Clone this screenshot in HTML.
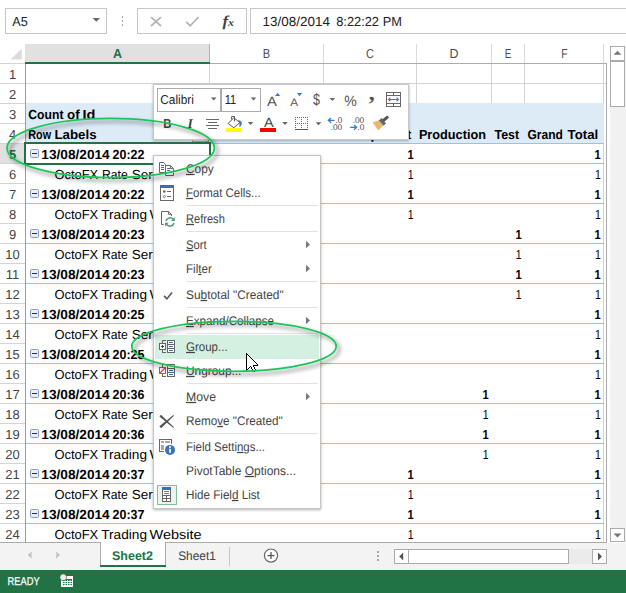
<!DOCTYPE html>
<html lang="en"><head><meta charset="utf-8"><title>Excel PivotTable - Group</title>
<style>html,body{margin:0;padding:0;background:#fff;overflow:hidden}svg{display:block}text{white-space:pre}</style></head><body>
<svg width="626" height="593" viewBox="0 0 626 593" font-family="'Liberation Sans', sans-serif" shape-rendering="crispEdges" text-rendering="geometricPrecision">
<defs>
<filter id="sh" x="-10%" y="-10%" width="120%" height="120%"><feGaussianBlur in="SourceAlpha" stdDeviation="1.8"/><feOffset dx="0.3" dy="1" result="b"/><feComponentTransfer><feFuncA type="linear" slope="0.3"/></feComponentTransfer><feMerge><feMergeNode/><feMergeNode in="SourceGraphic"/></feMerge></filter>
<filter id="esh" x="-5%" y="-10%" width="110%" height="125%"><feGaussianBlur in="SourceAlpha" stdDeviation="1.9"/><feOffset dx="3" dy="3"/><feComponentTransfer><feFuncA type="linear" slope="0.55"/></feComponentTransfer><feMerge><feMergeNode/><feMergeNode in="SourceGraphic"/></feMerge></filter>
</defs>
<rect x="0" y="0" width="626" height="593" fill="#fff" />
<rect x="5.5" y="8.5" width="101" height="25" fill="#fff" stroke="#c6c6c6"/>
<text x="12.2" y="26" font-size="13.1" fill="#222" textLength="15.5" lengthAdjust="spacingAndGlyphs" >A5</text>
<path d="M92.6 18 L100 18 L96.3 21.8 Z" fill="#666" shape-rendering="geometricPrecision"/>
<rect x="121.5" y="16.0" width="1.6" height="1.6" fill="#a6a6a6" />
<rect x="121.5" y="20.0" width="1.6" height="1.6" fill="#a6a6a6" />
<rect x="121.5" y="24.0" width="1.6" height="1.6" fill="#a6a6a6" />
<rect x="137.5" y="8.5" width="109" height="25" fill="#fff" stroke="#c6c6c6"/>
<path d="M151 17.2 L161 26 M161 17.2 L151 26" stroke="#b4b4b4" stroke-width="1.7" fill="none" shape-rendering="geometricPrecision"/>
<path d="M186.2 21.8 L190.2 25.8 L198.6 17" stroke="#b4b4b4" stroke-width="1.8" fill="none" shape-rendering="geometricPrecision"/>
<text x="222.5" y="25.5" font-family="'Liberation Serif', serif" font-style="italic" font-weight="bold" font-size="15" fill="#444" textLength="11.5" lengthAdjust="spacingAndGlyphs"><tspan font-size="15">f</tspan><tspan font-size="10.5" dy="0.3">x</tspan></text>
<path d="M626 8.5 H250.5 V33.5 H626" fill="none" stroke="#c6c6c6"/>
<text x="262.6" y="26.4" font-size="13.1" fill="#222" ><tspan x="262.6" textLength="67.4" lengthAdjust="spacingAndGlyphs">13/08/2014</tspan>  <tspan x="336.2" textLength="42.8" lengthAdjust="spacingAndGlyphs">8:22:22</tspan> <tspan x="382.8" textLength="19.2" lengthAdjust="spacingAndGlyphs">PM</tspan></text>
<path d="M21.8 48.6 L21.8 59.6 L10.6 59.6 Z" fill="#dcdcdc" shape-rendering="geometricPrecision"/>
<rect x="25" y="44" width="184" height="18" fill="#e1e1e1" />
<rect x="209" y="44" width="1" height="18" fill="#b4b4b4" />
<rect x="25" y="62" width="185" height="2" fill="#217346" />
<text x="113.0" y="58" font-size="13" fill="#217346" font-weight="bold" textLength="9" lengthAdjust="spacingAndGlyphs" >A</text>
<text x="262.8" y="58" font-size="13" fill="#505050" textLength="7.4" lengthAdjust="spacingAndGlyphs" >B</text>
<text x="366.0" y="58" font-size="13" fill="#505050" textLength="8" lengthAdjust="spacingAndGlyphs" >C</text>
<text x="449.5" y="58" font-size="13" fill="#505050" textLength="9" lengthAdjust="spacingAndGlyphs" >D</text>
<text x="504.7" y="58" font-size="13" fill="#505050" textLength="6.6" lengthAdjust="spacingAndGlyphs" >E</text>
<text x="561.35" y="58" font-size="13" fill="#505050" textLength="6.3" lengthAdjust="spacingAndGlyphs" >F</text>
<rect x="323" y="44" width="1" height="19" fill="#dadada" />
<rect x="416" y="44" width="1" height="19" fill="#dadada" />
<rect x="491" y="44" width="1" height="19" fill="#dadada" />
<rect x="524" y="44" width="1" height="19" fill="#dadada" />
<rect x="603" y="44" width="1" height="19" fill="#dadada" />
<rect x="210" y="63" width="397" height="1" fill="#ababab" />
<rect x="0" y="63" width="25" height="1" fill="#d4d4d4" />
<rect x="26" y="103" width="578" height="40" fill="#ddebf7" />
<rect x="26" y="83" width="580" height="1" fill="#d4d4d4" />
<rect x="26" y="103" width="578" height="1" fill="#ddebf7" />
<rect x="209" y="64" width="1" height="39" fill="#d4d4d4" />
<rect x="323" y="64" width="1" height="39" fill="#d4d4d4" />
<rect x="416" y="64" width="1" height="39" fill="#d4d4d4" />
<rect x="491" y="64" width="1" height="39" fill="#d4d4d4" />
<rect x="524" y="64" width="1" height="39" fill="#d4d4d4" />
<rect x="603" y="64" width="1" height="39" fill="#d4d4d4" />
<rect x="603" y="144" width="1" height="398" fill="#d4d4d4" />
<text x="12.5" y="79" font-size="13" fill="#444" text-anchor="middle" >1</text>
<rect x="0" y="83" width="25" height="1" fill="#d4d4d4" />
<text x="12.5" y="99" font-size="13" fill="#444" text-anchor="middle" >2</text>
<rect x="0" y="103" width="25" height="1" fill="#d4d4d4" />
<text x="12.5" y="119" font-size="13" fill="#444" text-anchor="middle" >3</text>
<rect x="0" y="123" width="25" height="1" fill="#d4d4d4" />
<text x="12.5" y="139" font-size="13" fill="#444" text-anchor="middle" >4</text>
<rect x="0" y="143" width="25" height="1" fill="#d4d4d4" />
<rect x="0" y="144" width="25" height="19" fill="#e1e1e1" />
<text x="12.5" y="159" font-size="13" fill="#217346" font-weight="bold" text-anchor="middle" >5</text>
<rect x="0" y="163" width="25" height="1" fill="#d4d4d4" />
<text x="12.5" y="179" font-size="13" fill="#444" text-anchor="middle" >6</text>
<rect x="0" y="183" width="25" height="1" fill="#d4d4d4" />
<text x="12.5" y="199" font-size="13" fill="#444" text-anchor="middle" >7</text>
<rect x="0" y="203" width="25" height="1" fill="#d4d4d4" />
<text x="12.5" y="219" font-size="13" fill="#444" text-anchor="middle" >8</text>
<rect x="0" y="223" width="25" height="1" fill="#d4d4d4" />
<text x="12.5" y="239" font-size="13" fill="#444" text-anchor="middle" >9</text>
<rect x="0" y="243" width="25" height="1" fill="#d4d4d4" />
<text x="12.5" y="259" font-size="13" fill="#444" text-anchor="middle" >10</text>
<rect x="0" y="263" width="25" height="1" fill="#d4d4d4" />
<text x="12.5" y="279" font-size="13" fill="#444" text-anchor="middle" >11</text>
<rect x="0" y="283" width="25" height="1" fill="#d4d4d4" />
<text x="12.5" y="299" font-size="13" fill="#444" text-anchor="middle" >12</text>
<rect x="0" y="303" width="25" height="1" fill="#d4d4d4" />
<text x="12.5" y="319" font-size="13" fill="#444" text-anchor="middle" >13</text>
<rect x="0" y="323" width="25" height="1" fill="#d4d4d4" />
<text x="12.5" y="339" font-size="13" fill="#444" text-anchor="middle" >14</text>
<rect x="0" y="343" width="25" height="1" fill="#d4d4d4" />
<text x="12.5" y="359" font-size="13" fill="#444" text-anchor="middle" >15</text>
<rect x="0" y="363" width="25" height="1" fill="#d4d4d4" />
<text x="12.5" y="379" font-size="13" fill="#444" text-anchor="middle" >16</text>
<rect x="0" y="383" width="25" height="1" fill="#d4d4d4" />
<text x="12.5" y="399" font-size="13" fill="#444" text-anchor="middle" >17</text>
<rect x="0" y="403" width="25" height="1" fill="#d4d4d4" />
<text x="12.5" y="419" font-size="13" fill="#444" text-anchor="middle" >18</text>
<rect x="0" y="423" width="25" height="1" fill="#d4d4d4" />
<text x="12.5" y="439" font-size="13" fill="#444" text-anchor="middle" >19</text>
<rect x="0" y="443" width="25" height="1" fill="#d4d4d4" />
<text x="12.5" y="459" font-size="13" fill="#444" text-anchor="middle" >20</text>
<rect x="0" y="463" width="25" height="1" fill="#d4d4d4" />
<text x="12.5" y="479" font-size="13" fill="#444" text-anchor="middle" >21</text>
<rect x="0" y="483" width="25" height="1" fill="#d4d4d4" />
<text x="12.5" y="499" font-size="13" fill="#444" text-anchor="middle" >22</text>
<rect x="0" y="503" width="25" height="1" fill="#d4d4d4" />
<text x="12.5" y="519" font-size="13" fill="#444" text-anchor="middle" >23</text>
<rect x="0" y="523" width="25" height="1" fill="#d4d4d4" />
<text x="12.5" y="539" font-size="13" fill="#444" text-anchor="middle" >24</text>
<rect x="0" y="543" width="25" height="1" fill="#d4d4d4" />
<rect x="25" y="64" width="1" height="478" fill="#9b9b9b" />
<rect x="606" y="63" width="1" height="480" fill="#ababab" />
<rect x="0" y="542" width="607" height="1" fill="#ababab" />
<rect x="26" y="143" width="578" height="1" fill="#9bc2e6" />
<rect x="26" y="163" width="578" height="1" fill="#9bc2e6" />
<rect x="26" y="203" width="578" height="1" fill="#9bc2e6" />
<rect x="26" y="243" width="578" height="1" fill="#9bc2e6" />
<rect x="26" y="283" width="578" height="1" fill="#9bc2e6" />
<rect x="26" y="323" width="578" height="1" fill="#9bc2e6" />
<rect x="26" y="363" width="578" height="1" fill="#9bc2e6" />
<rect x="26" y="403" width="578" height="1" fill="#9bc2e6" />
<rect x="26" y="443" width="578" height="1" fill="#9bc2e6" />
<rect x="26" y="483" width="578" height="1" fill="#9bc2e6" />
<rect x="26" y="523" width="578" height="1" fill="#9bc2e6" />
<text x="28.3" y="119.2" font-size="13.1" fill="#000" font-weight="bold" ><tspan x="28.3" textLength="35.2" lengthAdjust="spacingAndGlyphs">Count</tspan> <tspan x="67" textLength="12.6" lengthAdjust="spacingAndGlyphs">of</tspan> <tspan x="82.6" textLength="12.9" lengthAdjust="spacingAndGlyphs">Id</tspan></text>
<text x="28.3" y="139.2" font-size="13.1" fill="#000" font-weight="bold" ><tspan x="28.3" textLength="22.8" lengthAdjust="spacingAndGlyphs">Row</tspan> <tspan x="54.4" textLength="42.2" lengthAdjust="spacingAndGlyphs">Labels</tspan></text>
<text x="411.4" y="139.2" font-size="13.1" fill="#000" font-weight="bold" text-anchor="end" textLength="85.5" lengthAdjust="spacingAndGlyphs" >Development</text>
<text x="418.9" y="139.2" font-size="13.1" fill="#000" font-weight="bold" textLength="67.1" lengthAdjust="spacingAndGlyphs" >Production</text>
<text x="494.5" y="139.2" font-size="13.1" fill="#000" font-weight="bold" textLength="24.5" lengthAdjust="spacingAndGlyphs" >Test</text>
<text x="527.6" y="139.2" font-size="13.1" fill="#000" font-weight="bold" ><tspan x="527.5" textLength="35.4" lengthAdjust="spacingAndGlyphs">Grand</tspan> <tspan x="567.6" textLength="30.6" lengthAdjust="spacingAndGlyphs">Total</tspan></text>
<rect x="30.5" y="149.5" width="8" height="8" rx="1.2" fill="#eceef5" stroke="#8e9bb5" shape-rendering="geometricPrecision"/>
<rect x="32" y="153" width="5" height="1" fill="#1f2f6f" />
<text x="41.4" y="159.2" font-size="13.1" fill="#000" font-weight="bold" ><tspan x="41.3" textLength="68.4" lengthAdjust="spacingAndGlyphs">13/08/2014</tspan> <tspan x="112.6" textLength="31.8" lengthAdjust="spacingAndGlyphs">20:22</tspan></text>
<text x="54.6" y="179.2" font-size="13.1" fill="#000" ><tspan x="54.4" textLength="43.8" lengthAdjust="spacingAndGlyphs">OctoFX</tspan> <tspan x="101.9" textLength="25.8" lengthAdjust="spacingAndGlyphs">Rate</tspan> <tspan x="131.7" textLength="45.2" lengthAdjust="spacingAndGlyphs">Service</tspan></text>
<text x="413.6" y="159.2" font-size="13.1" fill="#000" font-weight="bold" text-anchor="end" textLength="6.2" lengthAdjust="spacingAndGlyphs" >1</text>
<text x="600.8000000000001" y="159.2" font-size="13.1" fill="#000" font-weight="bold" text-anchor="end" textLength="6.2" lengthAdjust="spacingAndGlyphs" >1</text>
<text x="413.6" y="179.2" font-size="13.1" fill="#000" text-anchor="end" textLength="5.8" lengthAdjust="spacingAndGlyphs" >1</text>
<text x="600.8000000000001" y="179.2" font-size="13.1" fill="#000" text-anchor="end" textLength="5.8" lengthAdjust="spacingAndGlyphs" >1</text>
<rect x="30.5" y="189.5" width="8" height="8" rx="1.2" fill="#eceef5" stroke="#8e9bb5" shape-rendering="geometricPrecision"/>
<rect x="32" y="193" width="5" height="1" fill="#1f2f6f" />
<text x="41.4" y="199.2" font-size="13.1" fill="#000" font-weight="bold" ><tspan x="41.3" textLength="68.4" lengthAdjust="spacingAndGlyphs">13/08/2014</tspan> <tspan x="112.6" textLength="31.8" lengthAdjust="spacingAndGlyphs">20:22</tspan></text>
<text x="54.6" y="219.2" font-size="13.1" fill="#000" ><tspan x="54.4" textLength="43.8" lengthAdjust="spacingAndGlyphs">OctoFX</tspan> <tspan x="101.2" textLength="45.8" lengthAdjust="spacingAndGlyphs">Trading</tspan> <tspan x="149.6" textLength="52" lengthAdjust="spacingAndGlyphs">Website</tspan></text>
<text x="413.6" y="199.2" font-size="13.1" fill="#000" font-weight="bold" text-anchor="end" textLength="6.2" lengthAdjust="spacingAndGlyphs" >1</text>
<text x="600.8000000000001" y="199.2" font-size="13.1" fill="#000" font-weight="bold" text-anchor="end" textLength="6.2" lengthAdjust="spacingAndGlyphs" >1</text>
<text x="413.6" y="219.2" font-size="13.1" fill="#000" text-anchor="end" textLength="5.8" lengthAdjust="spacingAndGlyphs" >1</text>
<text x="600.8000000000001" y="219.2" font-size="13.1" fill="#000" text-anchor="end" textLength="5.8" lengthAdjust="spacingAndGlyphs" >1</text>
<rect x="30.5" y="229.5" width="8" height="8" rx="1.2" fill="#eceef5" stroke="#8e9bb5" shape-rendering="geometricPrecision"/>
<rect x="32" y="233" width="5" height="1" fill="#1f2f6f" />
<text x="41.4" y="239.2" font-size="13.1" fill="#000" font-weight="bold" ><tspan x="41.3" textLength="68.4" lengthAdjust="spacingAndGlyphs">13/08/2014</tspan> <tspan x="112.6" textLength="31.8" lengthAdjust="spacingAndGlyphs">20:23</tspan></text>
<text x="54.6" y="259.2" font-size="13.1" fill="#000" ><tspan x="54.4" textLength="43.8" lengthAdjust="spacingAndGlyphs">OctoFX</tspan> <tspan x="101.9" textLength="25.8" lengthAdjust="spacingAndGlyphs">Rate</tspan> <tspan x="131.7" textLength="45.2" lengthAdjust="spacingAndGlyphs">Service</tspan></text>
<text x="521.6" y="239.2" font-size="13.1" fill="#000" font-weight="bold" text-anchor="end" textLength="6.2" lengthAdjust="spacingAndGlyphs" >1</text>
<text x="600.8000000000001" y="239.2" font-size="13.1" fill="#000" font-weight="bold" text-anchor="end" textLength="6.2" lengthAdjust="spacingAndGlyphs" >1</text>
<text x="521.6" y="259.2" font-size="13.1" fill="#000" text-anchor="end" textLength="5.8" lengthAdjust="spacingAndGlyphs" >1</text>
<text x="600.8000000000001" y="259.2" font-size="13.1" fill="#000" text-anchor="end" textLength="5.8" lengthAdjust="spacingAndGlyphs" >1</text>
<rect x="30.5" y="269.5" width="8" height="8" rx="1.2" fill="#eceef5" stroke="#8e9bb5" shape-rendering="geometricPrecision"/>
<rect x="32" y="273" width="5" height="1" fill="#1f2f6f" />
<text x="41.4" y="279.2" font-size="13.1" fill="#000" font-weight="bold" ><tspan x="41.3" textLength="68.4" lengthAdjust="spacingAndGlyphs">13/08/2014</tspan> <tspan x="112.6" textLength="31.8" lengthAdjust="spacingAndGlyphs">20:23</tspan></text>
<text x="54.6" y="299.2" font-size="13.1" fill="#000" ><tspan x="54.4" textLength="43.8" lengthAdjust="spacingAndGlyphs">OctoFX</tspan> <tspan x="101.2" textLength="45.8" lengthAdjust="spacingAndGlyphs">Trading</tspan> <tspan x="149.6" textLength="52" lengthAdjust="spacingAndGlyphs">Website</tspan></text>
<text x="521.6" y="279.2" font-size="13.1" fill="#000" font-weight="bold" text-anchor="end" textLength="6.2" lengthAdjust="spacingAndGlyphs" >1</text>
<text x="600.8000000000001" y="279.2" font-size="13.1" fill="#000" font-weight="bold" text-anchor="end" textLength="6.2" lengthAdjust="spacingAndGlyphs" >1</text>
<text x="521.6" y="299.2" font-size="13.1" fill="#000" text-anchor="end" textLength="5.8" lengthAdjust="spacingAndGlyphs" >1</text>
<text x="600.8000000000001" y="299.2" font-size="13.1" fill="#000" text-anchor="end" textLength="5.8" lengthAdjust="spacingAndGlyphs" >1</text>
<rect x="30.5" y="309.5" width="8" height="8" rx="1.2" fill="#eceef5" stroke="#8e9bb5" shape-rendering="geometricPrecision"/>
<rect x="32" y="313" width="5" height="1" fill="#1f2f6f" />
<text x="41.4" y="319.2" font-size="13.1" fill="#000" font-weight="bold" ><tspan x="41.3" textLength="68.4" lengthAdjust="spacingAndGlyphs">13/08/2014</tspan> <tspan x="112.6" textLength="31.8" lengthAdjust="spacingAndGlyphs">20:25</tspan></text>
<text x="54.6" y="339.2" font-size="13.1" fill="#000" ><tspan x="54.4" textLength="43.8" lengthAdjust="spacingAndGlyphs">OctoFX</tspan> <tspan x="101.9" textLength="25.8" lengthAdjust="spacingAndGlyphs">Rate</tspan> <tspan x="131.7" textLength="45.2" lengthAdjust="spacingAndGlyphs">Service</tspan></text>
<text x="316.6" y="319.2" font-size="13.1" fill="#000" font-weight="bold" text-anchor="end" textLength="6.2" lengthAdjust="spacingAndGlyphs" >1</text>
<text x="600.8000000000001" y="319.2" font-size="13.1" fill="#000" font-weight="bold" text-anchor="end" textLength="6.2" lengthAdjust="spacingAndGlyphs" >1</text>
<text x="316.6" y="339.2" font-size="13.1" fill="#000" text-anchor="end" textLength="5.8" lengthAdjust="spacingAndGlyphs" >1</text>
<text x="600.8000000000001" y="339.2" font-size="13.1" fill="#000" text-anchor="end" textLength="5.8" lengthAdjust="spacingAndGlyphs" >1</text>
<rect x="30.5" y="349.5" width="8" height="8" rx="1.2" fill="#eceef5" stroke="#8e9bb5" shape-rendering="geometricPrecision"/>
<rect x="32" y="353" width="5" height="1" fill="#1f2f6f" />
<text x="41.4" y="359.2" font-size="13.1" fill="#000" font-weight="bold" ><tspan x="41.3" textLength="68.4" lengthAdjust="spacingAndGlyphs">13/08/2014</tspan> <tspan x="112.6" textLength="31.8" lengthAdjust="spacingAndGlyphs">20:25</tspan></text>
<text x="54.6" y="379.2" font-size="13.1" fill="#000" ><tspan x="54.4" textLength="43.8" lengthAdjust="spacingAndGlyphs">OctoFX</tspan> <tspan x="101.2" textLength="45.8" lengthAdjust="spacingAndGlyphs">Trading</tspan> <tspan x="149.6" textLength="52" lengthAdjust="spacingAndGlyphs">Website</tspan></text>
<text x="316.6" y="359.2" font-size="13.1" fill="#000" font-weight="bold" text-anchor="end" textLength="6.2" lengthAdjust="spacingAndGlyphs" >1</text>
<text x="600.8000000000001" y="359.2" font-size="13.1" fill="#000" font-weight="bold" text-anchor="end" textLength="6.2" lengthAdjust="spacingAndGlyphs" >1</text>
<text x="316.6" y="379.2" font-size="13.1" fill="#000" text-anchor="end" textLength="5.8" lengthAdjust="spacingAndGlyphs" >1</text>
<text x="600.8000000000001" y="379.2" font-size="13.1" fill="#000" text-anchor="end" textLength="5.8" lengthAdjust="spacingAndGlyphs" >1</text>
<rect x="30.5" y="389.5" width="8" height="8" rx="1.2" fill="#eceef5" stroke="#8e9bb5" shape-rendering="geometricPrecision"/>
<rect x="32" y="393" width="5" height="1" fill="#1f2f6f" />
<text x="41.4" y="399.2" font-size="13.1" fill="#000" font-weight="bold" ><tspan x="41.3" textLength="68.4" lengthAdjust="spacingAndGlyphs">13/08/2014</tspan> <tspan x="112.6" textLength="31.8" lengthAdjust="spacingAndGlyphs">20:36</tspan></text>
<text x="54.6" y="419.2" font-size="13.1" fill="#000" ><tspan x="54.4" textLength="43.8" lengthAdjust="spacingAndGlyphs">OctoFX</tspan> <tspan x="101.9" textLength="25.8" lengthAdjust="spacingAndGlyphs">Rate</tspan> <tspan x="131.7" textLength="45.2" lengthAdjust="spacingAndGlyphs">Service</tspan></text>
<text x="488.6" y="399.2" font-size="13.1" fill="#000" font-weight="bold" text-anchor="end" textLength="6.2" lengthAdjust="spacingAndGlyphs" >1</text>
<text x="600.8000000000001" y="399.2" font-size="13.1" fill="#000" font-weight="bold" text-anchor="end" textLength="6.2" lengthAdjust="spacingAndGlyphs" >1</text>
<text x="488.6" y="419.2" font-size="13.1" fill="#000" text-anchor="end" textLength="5.8" lengthAdjust="spacingAndGlyphs" >1</text>
<text x="600.8000000000001" y="419.2" font-size="13.1" fill="#000" text-anchor="end" textLength="5.8" lengthAdjust="spacingAndGlyphs" >1</text>
<rect x="30.5" y="429.5" width="8" height="8" rx="1.2" fill="#eceef5" stroke="#8e9bb5" shape-rendering="geometricPrecision"/>
<rect x="32" y="433" width="5" height="1" fill="#1f2f6f" />
<text x="41.4" y="439.2" font-size="13.1" fill="#000" font-weight="bold" ><tspan x="41.3" textLength="68.4" lengthAdjust="spacingAndGlyphs">13/08/2014</tspan> <tspan x="112.6" textLength="31.8" lengthAdjust="spacingAndGlyphs">20:36</tspan></text>
<text x="54.6" y="459.2" font-size="13.1" fill="#000" ><tspan x="54.4" textLength="43.8" lengthAdjust="spacingAndGlyphs">OctoFX</tspan> <tspan x="101.2" textLength="45.8" lengthAdjust="spacingAndGlyphs">Trading</tspan> <tspan x="149.6" textLength="52" lengthAdjust="spacingAndGlyphs">Website</tspan></text>
<text x="488.6" y="439.2" font-size="13.1" fill="#000" font-weight="bold" text-anchor="end" textLength="6.2" lengthAdjust="spacingAndGlyphs" >1</text>
<text x="600.8000000000001" y="439.2" font-size="13.1" fill="#000" font-weight="bold" text-anchor="end" textLength="6.2" lengthAdjust="spacingAndGlyphs" >1</text>
<text x="488.6" y="459.2" font-size="13.1" fill="#000" text-anchor="end" textLength="5.8" lengthAdjust="spacingAndGlyphs" >1</text>
<text x="600.8000000000001" y="459.2" font-size="13.1" fill="#000" text-anchor="end" textLength="5.8" lengthAdjust="spacingAndGlyphs" >1</text>
<rect x="30.5" y="469.5" width="8" height="8" rx="1.2" fill="#eceef5" stroke="#8e9bb5" shape-rendering="geometricPrecision"/>
<rect x="32" y="473" width="5" height="1" fill="#1f2f6f" />
<text x="41.4" y="479.2" font-size="13.1" fill="#000" font-weight="bold" ><tspan x="41.3" textLength="68.4" lengthAdjust="spacingAndGlyphs">13/08/2014</tspan> <tspan x="112.6" textLength="31.8" lengthAdjust="spacingAndGlyphs">20:37</tspan></text>
<text x="54.6" y="499.2" font-size="13.1" fill="#000" ><tspan x="54.4" textLength="43.8" lengthAdjust="spacingAndGlyphs">OctoFX</tspan> <tspan x="101.9" textLength="25.8" lengthAdjust="spacingAndGlyphs">Rate</tspan> <tspan x="131.7" textLength="45.2" lengthAdjust="spacingAndGlyphs">Service</tspan></text>
<text x="413.6" y="479.2" font-size="13.1" fill="#000" font-weight="bold" text-anchor="end" textLength="6.2" lengthAdjust="spacingAndGlyphs" >1</text>
<text x="600.8000000000001" y="479.2" font-size="13.1" fill="#000" font-weight="bold" text-anchor="end" textLength="6.2" lengthAdjust="spacingAndGlyphs" >1</text>
<text x="413.6" y="499.2" font-size="13.1" fill="#000" text-anchor="end" textLength="5.8" lengthAdjust="spacingAndGlyphs" >1</text>
<text x="600.8000000000001" y="499.2" font-size="13.1" fill="#000" text-anchor="end" textLength="5.8" lengthAdjust="spacingAndGlyphs" >1</text>
<rect x="30.5" y="509.5" width="8" height="8" rx="1.2" fill="#eceef5" stroke="#8e9bb5" shape-rendering="geometricPrecision"/>
<rect x="32" y="513" width="5" height="1" fill="#1f2f6f" />
<text x="41.4" y="519.2" font-size="13.1" fill="#000" font-weight="bold" ><tspan x="41.3" textLength="68.4" lengthAdjust="spacingAndGlyphs">13/08/2014</tspan> <tspan x="112.6" textLength="31.8" lengthAdjust="spacingAndGlyphs">20:37</tspan></text>
<text x="54.6" y="539.2" font-size="13.1" fill="#000" ><tspan x="54.4" textLength="43.8" lengthAdjust="spacingAndGlyphs">OctoFX</tspan> <tspan x="101.2" textLength="45.8" lengthAdjust="spacingAndGlyphs">Trading</tspan> <tspan x="149.6" textLength="52" lengthAdjust="spacingAndGlyphs">Website</tspan></text>
<text x="413.6" y="519.2" font-size="13.1" fill="#000" font-weight="bold" text-anchor="end" textLength="6.2" lengthAdjust="spacingAndGlyphs" >1</text>
<text x="600.8000000000001" y="519.2" font-size="13.1" fill="#000" font-weight="bold" text-anchor="end" textLength="6.2" lengthAdjust="spacingAndGlyphs" >1</text>
<text x="413.6" y="539.2" font-size="13.1" fill="#000" text-anchor="end" textLength="5.8" lengthAdjust="spacingAndGlyphs" >1</text>
<text x="600.8000000000001" y="539.2" font-size="13.1" fill="#000" text-anchor="end" textLength="5.8" lengthAdjust="spacingAndGlyphs" >1</text>
<rect x="192.5" y="126.5" width="16" height="15" fill="#ececec" stroke="#a6a6a6"/>
<path d="M197.5 132.5 L203.5 132.5 L200.5 135.8 Z" fill="#555" shape-rendering="geometricPrecision"/>
<rect x="25" y="143" width="185" height="21" fill="none" stroke="#217346" stroke-width="2"/>
<rect x="610" y="46" width="16" height="496" fill="#f1f1f1" />
<rect x="610.5" y="46.5" width="14" height="14" fill="#fff" stroke="#ababab"/>
<path d="M613.6 54.8 L621.4 54.8 L617.5 50.8 Z" fill="#777" shape-rendering="geometricPrecision"/>
<rect x="610.5" y="61.5" width="14" height="45" fill="#fff" stroke="#ababab"/>
<rect x="610.5" y="528.5" width="14" height="13" fill="#fff" stroke="#ababab"/>
<path d="M613.6 533.4 L621.4 533.4 L617.5 537.4 Z" fill="#777" shape-rendering="geometricPrecision"/>
<rect x="0" y="543" width="626" height="27" fill="#f3f3f3" />
<rect x="101" y="542" width="64" height="23" fill="#fff" />
<rect x="100" y="543" width="1" height="22" fill="#ababab" />
<rect x="165" y="543" width="1" height="22" fill="#ababab" />
<rect x="100" y="565" width="66" height="2" fill="#217346" />
<path d="M31.6 551.5 L31.6 558.7 L27.8 555.1 Z" fill="#c3c3c3" shape-rendering="geometricPrecision"/>
<path d="M56.2 551.5 L56.2 558.7 L60 555.1 Z" fill="#c3c3c3" shape-rendering="geometricPrecision"/>
<text x="112" y="560" font-size="12.6" fill="#217346" font-weight="bold" textLength="41" lengthAdjust="spacingAndGlyphs" >Sheet2</text>
<text x="178.2" y="560" font-size="12.4" fill="#444" textLength="37.6" lengthAdjust="spacingAndGlyphs" >Sheet1</text>
<rect x="229" y="547" width="1" height="19" fill="#c6c6c6" />
<g shape-rendering="geometricPrecision"><circle cx="271" cy="555.6" r="6.6" fill="#fff" stroke="#666" stroke-width="1.2"/><path d="M267.5 555.6 H274.5 M271 552.1 V559.1" stroke="#555" stroke-width="1.3"/></g>
<rect x="377.3" y="551" width="1.5" height="1.5" fill="#a6a6a6" />
<rect x="377.3" y="555" width="1.5" height="1.5" fill="#a6a6a6" />
<rect x="377.3" y="559" width="1.5" height="1.5" fill="#a6a6a6" />
<rect x="394" y="549" width="213" height="15" fill="#ebebeb" />
<rect x="394.5" y="549.5" width="14" height="14" fill="#fff" stroke="#ababab"/>
<path d="M403.2 552.6 L403.2 560.4 L399.2 556.5 Z" fill="#555" shape-rendering="geometricPrecision"/>
<rect x="408.5" y="549.5" width="160" height="14" fill="#fff" stroke="#ababab"/>
<rect x="592.5" y="549.5" width="14" height="14" fill="#fff" stroke="#ababab"/>
<path d="M598 552.6 L598 560.4 L602 556.5 Z" fill="#555" shape-rendering="geometricPrecision"/>
<rect x="0" y="570" width="626" height="23" fill="#217346" />
<text x="7.6" y="585.2" font-size="11.4" fill="#fff" textLength="32" lengthAdjust="spacingAndGlyphs" stroke="#fff" stroke-width="0.25">READY</text>
<rect x="61" y="576" width="12" height="11" fill="#fff" />
<rect x="62" y="579" width="10" height="1" fill="#217346" />
<rect x="63" y="580" width="1.5" height="1.1" fill="#217346" shape-rendering="geometricPrecision"/>
<rect x="63" y="582" width="1.5" height="1.1" fill="#217346" shape-rendering="geometricPrecision"/>
<rect x="63" y="584" width="1.5" height="1.1" fill="#217346" shape-rendering="geometricPrecision"/>
<rect x="65.5" y="580" width="1.5" height="1.1" fill="#217346" shape-rendering="geometricPrecision"/>
<rect x="65.5" y="582" width="1.5" height="1.1" fill="#217346" shape-rendering="geometricPrecision"/>
<rect x="65.5" y="584" width="1.5" height="1.1" fill="#217346" shape-rendering="geometricPrecision"/>
<rect x="68" y="580" width="1.5" height="1.1" fill="#217346" shape-rendering="geometricPrecision"/>
<rect x="68" y="582" width="1.5" height="1.1" fill="#217346" shape-rendering="geometricPrecision"/>
<rect x="68" y="584" width="1.5" height="1.1" fill="#217346" shape-rendering="geometricPrecision"/>
<rect x="70.5" y="580" width="1.5" height="1.1" fill="#217346" shape-rendering="geometricPrecision"/>
<rect x="70.5" y="582" width="1.5" height="1.1" fill="#217346" shape-rendering="geometricPrecision"/>
<rect x="70.5" y="584" width="1.5" height="1.1" fill="#217346" shape-rendering="geometricPrecision"/>
<circle cx="63.2" cy="577.2" r="3.5" fill="#217346" shape-rendering="geometricPrecision"/><circle cx="63.2" cy="577.2" r="2.9" fill="#e6eee9" shape-rendering="geometricPrecision"/>
<rect x="153.5" y="84.5" width="255" height="55" fill="#fff" stroke="#c8c8c8" filter="url(#sh)"/>
<rect x="157.5" y="88.5" width="63" height="23" fill="#fff" stroke="#ababab"/>
<rect x="221.5" y="88.5" width="39" height="23" fill="#fff" stroke="#ababab"/>
<text x="160.3" y="103.5" font-size="13" fill="#222" textLength="33.5" lengthAdjust="spacingAndGlyphs" >Calibri</text>
<text x="224.8" y="103.5" font-size="13" fill="#222" textLength="11.4" lengthAdjust="spacingAndGlyphs" >11</text>
<path d="M210.89999999999998 97.39999999999999 L216.5 97.39999999999999 L213.7 100.39999999999999 Z" fill="#666" shape-rendering="geometricPrecision"/>
<path d="M250.7 97.39999999999999 L256.3 97.39999999999999 L253.5 100.39999999999999 Z" fill="#666" shape-rendering="geometricPrecision"/>
<text x="267" y="105.8" font-size="13.4" fill="#555" textLength="9.9" lengthAdjust="spacingAndGlyphs" >A</text>
<path d="M275 96 L280.2 96 L277.6 92.8 Z" fill="#3b78c3" shape-rendering="geometricPrecision"/>
<text x="290.2" y="105.8" font-size="10.8" fill="#555" textLength="7.8" lengthAdjust="spacingAndGlyphs" >A</text>
<path d="M297 93 L302.2 93 L299.6 96.2 Z" fill="#3b78c3" shape-rendering="geometricPrecision"/>
<text x="313" y="104.9" font-size="16.4" fill="#555" textLength="7" lengthAdjust="spacingAndGlyphs" >$</text>
<path d="M329.59999999999997 97.89999999999999 L335.2 97.89999999999999 L332.4 100.89999999999999 Z" fill="#666" shape-rendering="geometricPrecision"/>
<text x="344.2" y="106.2" font-size="15" fill="#555" textLength="12.5" lengthAdjust="spacingAndGlyphs" >%</text>
<text x="368.8" y="100.4" font-family="'Liberation Serif', serif" font-weight="bold" font-size="23" fill="#555" textLength="6" lengthAdjust="spacingAndGlyphs">,</text>
<rect x="386.5" y="92.5" width="14" height="14" fill="#fff" stroke="#666"/>
<rect x="387" y="95" width="13" height="1" fill="#666" />
<rect x="387" y="103" width="13" height="1" fill="#666" />
<rect x="393" y="93" width="1" height="2" fill="#666" />
<rect x="393" y="104" width="1" height="2" fill="#666" />
<rect x="389" y="99" width="9" height="1" fill="#3b78c3" />
<path d="M390.4 97.6L388.5 99.5L390.4 101.4M396.6 97.6L398.5 99.5L396.6 101.4" stroke="#3b78c3" stroke-width="1.1" fill="none" shape-rendering="geometricPrecision"/>
<text x="163.2" y="127.6" font-size="13" fill="#444" font-weight="bold" textLength="8.2" lengthAdjust="spacingAndGlyphs" >B</text>
<text x="187.6" y="127.6" font-family="'Liberation Serif', serif" font-style="italic" font-weight="bold" font-size="13.5" fill="#444">I</text>
<rect x="205.5" y="119" width="13.300000000000011" height="1" fill="#666" />
<rect x="207.5" y="122" width="9.300000000000011" height="1" fill="#666" />
<rect x="205.5" y="125" width="13.300000000000011" height="1" fill="#666" />
<rect x="207.5" y="128" width="9.300000000000011" height="1" fill="#666" />
<g shape-rendering="geometricPrecision"><path d="M228.1 123.5 L233.8 117.8 L239.9 122.6 L233.8 127.7 Z" fill="#fff" stroke="#555" stroke-width="1"/><path d="M231.6 119.4 V116.5 H234.5 V121.4" fill="none" stroke="#555" stroke-width="1"/><path d="M238.2 119.8 Q242.8 121.4 241.7 124.2 Q240.9 126.2 239.5 127.5 Q240.4 123.4 238.2 119.8Z" fill="#3b78c3"/></g>
<rect x="226" y="128" width="16" height="4" fill="#ffff00" />
<path d="M247.79999999999998 122.0 L253.4 122.0 L250.6 125.0 Z" fill="#666" shape-rendering="geometricPrecision"/>
<text x="264" y="127.2" font-size="13.4" fill="#444" textLength="9.6" lengthAdjust="spacingAndGlyphs" >A</text>
<rect x="260" y="128" width="16" height="4" fill="#ff0000" />
<path d="M282.2 122.0 L287.8 122.0 L285 125.0 Z" fill="#666" shape-rendering="geometricPrecision"/>
<rect x="295" y="117" width="1" height="1" fill="#666" />
<rect x="295" y="123" width="1" height="1" fill="#666" />
<rect x="297" y="117" width="1" height="1" fill="#666" />
<rect x="297" y="123" width="1" height="1" fill="#666" />
<rect x="299" y="117" width="1" height="1" fill="#666" />
<rect x="299" y="123" width="1" height="1" fill="#666" />
<rect x="301" y="117" width="1" height="1" fill="#666" />
<rect x="301" y="123" width="1" height="1" fill="#666" />
<rect x="303" y="117" width="1" height="1" fill="#666" />
<rect x="303" y="123" width="1" height="1" fill="#666" />
<rect x="305" y="117" width="1" height="1" fill="#666" />
<rect x="305" y="123" width="1" height="1" fill="#666" />
<rect x="307" y="117" width="1" height="1" fill="#666" />
<rect x="307" y="123" width="1" height="1" fill="#666" />
<rect x="295" y="117" width="1" height="1" fill="#666" />
<rect x="295" y="119" width="1" height="1" fill="#666" />
<rect x="295" y="121" width="1" height="1" fill="#666" />
<rect x="295" y="123" width="1" height="1" fill="#666" />
<rect x="295" y="125" width="1" height="1" fill="#666" />
<rect x="295" y="127" width="1" height="1" fill="#666" />
<rect x="301" y="117" width="1" height="1" fill="#666" />
<rect x="301" y="119" width="1" height="1" fill="#666" />
<rect x="301" y="121" width="1" height="1" fill="#666" />
<rect x="301" y="123" width="1" height="1" fill="#666" />
<rect x="301" y="125" width="1" height="1" fill="#666" />
<rect x="301" y="127" width="1" height="1" fill="#666" />
<rect x="307" y="117" width="1" height="1" fill="#666" />
<rect x="307" y="119" width="1" height="1" fill="#666" />
<rect x="307" y="121" width="1" height="1" fill="#666" />
<rect x="307" y="123" width="1" height="1" fill="#666" />
<rect x="307" y="125" width="1" height="1" fill="#666" />
<rect x="307" y="127" width="1" height="1" fill="#666" />
<rect x="295" y="129" width="13" height="1" fill="#555" />
<path d="M315.7 122.19999999999999 L321.3 122.19999999999999 L318.5 125.19999999999999 Z" fill="#666" shape-rendering="geometricPrecision"/>
<text x="335.4" y="122.8" font-size="8.3" fill="#444" textLength="6.8" lengthAdjust="spacingAndGlyphs" >.0</text>
<text x="330.7" y="129.8" font-size="8.3" fill="#444" textLength="11.5" lengthAdjust="spacingAndGlyphs" >.00</text>
<path d="M334.6 120.3H328.4M331 117.9L328.4 120.3L331 122.7" stroke="#3b78c3" stroke-width="1.3" fill="none" shape-rendering="geometricPrecision"/>
<text x="352.7" y="122.8" font-size="8.3" fill="#444" textLength="11.5" lengthAdjust="spacingAndGlyphs" >.00</text>
<text x="357.6" y="129.8" font-size="8.3" fill="#444" textLength="6.8" lengthAdjust="spacingAndGlyphs" >.0</text>
<path d="M350.2 127.3H356.6M354 124.9L356.6 127.3L354 129.7" stroke="#3b78c3" stroke-width="1.3" fill="none" shape-rendering="geometricPrecision"/>
<g shape-rendering="geometricPrecision"><path d="M372.6 122.6 L378.4 120.6 L383.4 125.4 L378.2 130.6 Z" fill="#e8b96f"/><path d="M378.6 120.4 L381.8 118 L386 123.4 L383.6 125.8 Z" fill="#6a6a6a"/><path d="M384 120 L387.2 117.4" stroke="#555" stroke-width="3" stroke-linecap="round"/></g>
<rect x="153.5" y="155.5" width="167" height="353" fill="#fff" stroke="#c6c6c6" filter="url(#sh)"/>
<rect x="155" y="335" width="164" height="24" fill="#d3f0e0" />
<text x="186" y="172.9" font-size="12.5" fill="#444" textLength="27.8" lengthAdjust="spacingAndGlyphs" ><tspan text-decoration="underline">C</tspan>opy</text>
<text x="186" y="196.9" font-size="12.5" fill="#444" textLength="74.7" lengthAdjust="spacingAndGlyphs" ><tspan text-decoration="underline">F</tspan>ormat Cells...</text>
<text x="186" y="222.9" font-size="12.5" fill="#444" textLength="38.8" lengthAdjust="spacingAndGlyphs" ><tspan text-decoration="underline">R</tspan>efresh</text>
<text x="186" y="248.9" font-size="12.5" fill="#444" textLength="20.6" lengthAdjust="spacingAndGlyphs" ><tspan text-decoration="underline">S</tspan>ort</text>
<text x="186" y="272.9" font-size="12.5" fill="#444" textLength="25.8" lengthAdjust="spacingAndGlyphs" >Fil<tspan text-decoration="underline">t</tspan>er</text>
<text x="186" y="298.9" font-size="12.5" fill="#444" textLength="97.7" lengthAdjust="spacingAndGlyphs" >Su<tspan text-decoration="underline">b</tspan>total "Created"</text>
<text x="186" y="324.9" font-size="12.5" fill="#444" textLength="88" lengthAdjust="spacingAndGlyphs" ><tspan text-decoration="underline">E</tspan>xpand/Collapse</text>
<text x="186" y="350.9" font-size="12.5" fill="#444" textLength="41.6" lengthAdjust="spacingAndGlyphs" ><tspan text-decoration="underline">G</tspan>roup...</text>
<text x="186" y="374.9" font-size="12.5" fill="#444" textLength="55.4" lengthAdjust="spacingAndGlyphs" ><tspan text-decoration="underline">U</tspan>ngroup...</text>
<text x="186" y="400.9" font-size="12.5" fill="#444" textLength="30" lengthAdjust="spacingAndGlyphs" ><tspan text-decoration="underline">M</tspan>ove</text>
<text x="186" y="424.9" font-size="12.5" fill="#444" textLength="96.8" lengthAdjust="spacingAndGlyphs" >Remo<tspan text-decoration="underline">v</tspan>e "Created"</text>
<text x="186" y="450.9" font-size="12.5" fill="#444" textLength="79" lengthAdjust="spacingAndGlyphs" >Field Setti<tspan text-decoration="underline">n</tspan>gs...</text>
<text x="186" y="474.9" font-size="12.5" fill="#444" textLength="110" lengthAdjust="spacingAndGlyphs" >PivotTable <tspan text-decoration="underline">O</tspan>ptions...</text>
<text x="186" y="498.9" font-size="12.5" fill="#444" textLength="73.8" lengthAdjust="spacingAndGlyphs" >Hide Fiel<tspan text-decoration="underline">d</tspan> List</text>
<rect x="187" y="205" width="131" height="1" fill="#e1e1e1" />
<rect x="187" y="231" width="131" height="1" fill="#e1e1e1" />
<rect x="187" y="281" width="131" height="1" fill="#e1e1e1" />
<rect x="187" y="307" width="131" height="1" fill="#e1e1e1" />
<rect x="187" y="333" width="131" height="1" fill="#e1e1e1" />
<rect x="187" y="383" width="131" height="1" fill="#e1e1e1" />
<rect x="187" y="433" width="131" height="1" fill="#e1e1e1" />
<path d="M306 240.8 L306 248.2 L310 244.5 Z" fill="#777" shape-rendering="geometricPrecision"/>
<path d="M306 264.8 L306 272.2 L310 268.5 Z" fill="#777" shape-rendering="geometricPrecision"/>
<path d="M306 316.8 L306 324.2 L310 320.5 Z" fill="#777" shape-rendering="geometricPrecision"/>
<path d="M306 392.8 L306 400.2 L310 396.5 Z" fill="#777" shape-rendering="geometricPrecision"/>
<g shape-rendering="geometricPrecision" fill="#fff" stroke="#666" stroke-width="1"><path d="M159.5 162.5H163.6L165.5 164.4V172.5H159.5Z"/><path d="M165.5 165.5H170.4L173.5 168.6V175.5H165.5Z"/><path d="M170.4 165.5V168.6H173.5" fill="none"/></g>
<rect x="161" y="165" width="3" height="1" fill="#3a6fb5" />
<rect x="161" y="167" width="3" height="1" fill="#3a6fb5" />
<rect x="161" y="169" width="3" height="1" fill="#3a6fb5" />
<rect x="167" y="168" width="3" height="1" fill="#3a6fb5" />
<rect x="167" y="170" width="3" height="1" fill="#3a6fb5" />
<rect x="167" y="172" width="5" height="1" fill="#3a6fb5" />
<rect x="160.5" y="185.5" width="13" height="15" fill="#fff" stroke="#666"/>
<rect x="160" y="185" width="14" height="3" fill="#3a6fb5" />
<g shape-rendering="geometricPrecision"><circle cx="164.3" cy="191.5" r="1.3" fill="#666"/><circle cx="164.3" cy="196.5" r="1.1" fill="#fff" stroke="#666" stroke-width=".8"/></g>
<rect x="167" y="191" width="4" height="1" fill="#666" />
<rect x="167" y="196" width="4" height="1" fill="#666" />
<g shape-rendering="geometricPrecision" fill="none"><path d="M163.8 224.5H161.5V211.5H168.6L171.5 214.4V216" stroke="#666"/><path d="M168.6 211.5V214.4H171.5" stroke="#666"/><path d="M165.9 221 A4.2 4.2 0 0 1 173.4 219.6" stroke="#4a9a7a" stroke-width="1.5"/><path d="M174 223 A4.2 4.2 0 0 1 166.5 224.4" stroke="#4a9a7a" stroke-width="1.5"/><path d="M174.8 217.2V221H171Z" fill="#4a9a7a"/><path d="M165 226.6V222.8H168.8Z" fill="#4a9a7a"/></g>
<path d="M164.1 295.9 L166.9 298.9 L172 292.5" stroke="#555" stroke-width="1.6" fill="none" shape-rendering="geometricPrecision"/>
<rect x="167.5" y="340.5" width="7" height="12" fill="#fff" stroke="#666"/>
<rect x="167" y="344" width="8" height="1" fill="#666" />
<rect x="167" y="348" width="8" height="1" fill="#666" />
<rect x="169" y="342" width="4" height="1" fill="#3a6fb5" />
<rect x="169" y="346" width="4" height="1" fill="#3a6fb5" />
<rect x="169" y="350" width="4" height="1" fill="#3a6fb5" />
<path d="M165.5 340.5H162.5V352.5H165.5" fill="none" stroke="#666"/>
<rect x="159.5" y="343.5" width="6" height="6" fill="#fff" stroke="#666"/>
<rect x="161" y="346" width="3" height="1" fill="#444" />
<rect x="162" y="345" width="1" height="3" fill="#444" />
<rect x="167.5" y="364.5" width="7" height="12" fill="#fff" stroke="#666"/>
<rect x="167" y="368" width="8" height="1" fill="#666" />
<rect x="167" y="372" width="8" height="1" fill="#666" />
<rect x="169" y="370" width="4" height="1" fill="#3a6fb5" />
<rect x="169" y="374" width="4" height="1" fill="#3a6fb5" />
<path d="M165.5 364.5H162.5V376.5H165.5" fill="none" stroke="#666"/>
<rect x="159.5" y="367.5" width="6" height="6" fill="#fff" stroke="#d8502e" stroke-width="1.2"/>
<path d="M160 373L165 368" stroke="#d8502e" stroke-width="1.2" shape-rendering="geometricPrecision"/>
<g shape-rendering="geometricPrecision" fill="#555"><path d="M161 414.7L174 427.3L173.4 427.9L159.4 416.5Z"/><path d="M159.3 426.2L173.4 415L174 415.7L161.1 428.2Z"/></g>
<path d="M164 451.5H159.5V439.5H171.5V444" fill="none" stroke="#666"/>
<rect x="161" y="441" width="3" height="2" fill="#a8a8a8" />
<rect x="165" y="441" width="5" height="2" fill="#a8a8a8" />
<rect x="161" y="445" width="3" height="5" fill="#a8a8a8" />
<g shape-rendering="geometricPrecision"><circle cx="170" cy="449.9" r="5" fill="#3a73b8"/><rect x="169.2" y="448.8" width="1.7" height="4" fill="#fff"/><circle cx="170" cy="447" r="1" fill="#fff"/></g>
<rect x="157.5" y="485.5" width="19" height="19" fill="#e9f4ed" stroke="#86bf9f"/>
<rect x="162.5" y="487.5" width="8" height="14" fill="#fff" stroke="#666"/>
<rect x="162" y="487" width="9" height="3" fill="#3a6fb5" />
<rect x="164" y="491" width="5" height="1" fill="#777" />
<rect x="164" y="493" width="5" height="1" fill="#777" />
<rect x="162" y="495" width="9" height="1" fill="#666" />
<rect x="162" y="498" width="9" height="1" fill="#666" />
<rect x="166" y="495" width="1" height="6" fill="#666" />
<path d="M247 355h1v1h-1zM247 356h2v1h-2zM247 357h3v1h-3zM247 358h4v1h-4zM247 359h5v1h-5zM247 360h6v1h-6zM247 361h7v1h-7zM247 362h8v1h-8zM247 363h9v1h-9zM247 364h10v1h-10zM247 365h6v1h-6zM247 366h3v1h-3zM251 366h2v1h-2zM247 367h2v1h-2zM252 367h2v1h-2zM247 368h1v1h-1zM252 368h2v1h-2zM253 369h2v1h-2zM253 370h2v1h-2z" fill="#fff"/>
<path d="M246 353h1v1h-1zM246 354h2v1h-2zM246 355h1v1h-1zM248 355h1v1h-1zM246 356h1v1h-1zM249 356h1v1h-1zM246 357h1v1h-1zM250 357h1v1h-1zM246 358h1v1h-1zM251 358h1v1h-1zM246 359h1v1h-1zM252 359h1v1h-1zM246 360h1v1h-1zM253 360h1v1h-1zM246 361h1v1h-1zM254 361h1v1h-1zM246 362h1v1h-1zM255 362h1v1h-1zM246 363h1v1h-1zM256 363h1v1h-1zM246 364h1v1h-1zM257 364h1v1h-1zM246 365h1v1h-1zM253 365h5v1h-5zM246 366h1v1h-1zM250 366h1v1h-1zM253 366h1v1h-1zM246 367h1v1h-1zM249 367h1v1h-1zM251 367h1v1h-1zM254 367h1v1h-1zM246 368h1v1h-1zM248 368h1v1h-1zM251 368h1v1h-1zM254 368h1v1h-1zM246 369h2v1h-2zM252 369h1v1h-1zM255 369h1v1h-1zM246 370h1v1h-1zM252 370h1v1h-1zM255 370h1v1h-1zM253 371h2v1h-2z" fill="#000"/>
<g shape-rendering="geometricPrecision" fill="none" stroke="#1fc45b" stroke-width="1.8" filter="url(#esh)"><ellipse cx="110.7" cy="148" rx="103.7" ry="29.6"/><ellipse cx="234" cy="346.3" rx="102.2" ry="25"/></g>
</svg></body></html>
